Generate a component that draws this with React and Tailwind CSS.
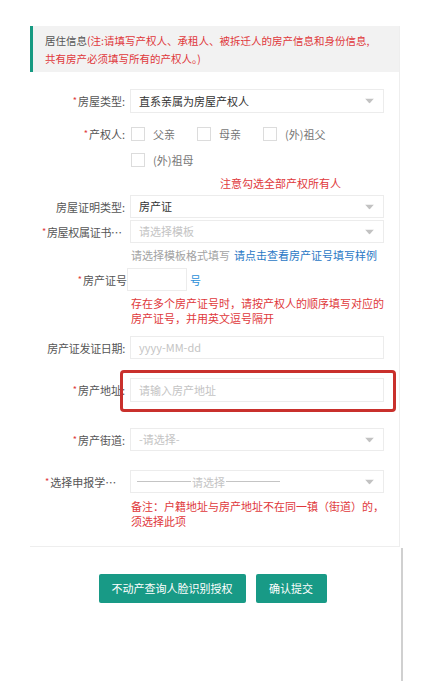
import React from 'react'

const font = { fontFamily: '"Noto Sans CJK SC", "Liberation Sans", sans-serif' }

const Arrow = () => (
  <svg width="9" height="5" viewBox="0 0 9 5" className="absolute right-[9px] top-1/2 -translate-y-1/2">
    <path d="M0 0 L9 0 L4.5 5 Z" fill="#c2c2c2" />
  </svg>
)

const Label = ({ children, required, className = '' }) => (
  <div className={`w-[100px] shrink-0 pr-[5px] text-right text-[#555] leading-[16px] truncate ${className}`}>
    {required && <span className="text-[#e0383b] text-[9px] align-top mr-[1px]">*</span>}
    {children}
  </div>
)

const Select = ({ value, placeholder, className = '' }) => (
  <div className={`relative w-[254px] h-[23px] border border-[#ececec] bg-white flex items-center pl-[8px] ${className}`}>
    {value ? (
      <span className="text-[#333]">{value}</span>
    ) : (
      <span className="text-[#c4c4c4]">{placeholder}</span>
    )}
    <Arrow />
  </div>
)

const Check = ({ label }) => (
  <div className="flex items-center w-[66px]">
    <span className="w-[14px] h-[14px] border border-[#dcdcdc] bg-white shrink-0" />
    <span className="ml-[8px] text-[#777] whitespace-nowrap leading-[16px]">{label}</span>
  </div>
)

const App = () => {
  return (
    <div className="w-[442px] min-h-[681px] bg-white text-[11px] leading-none" style={font}>
      <div className="pt-[26px] pl-[30px]">
        {/* card */}
        <div className="w-[370px] bg-white border-r border-b border-[#eeeeee] pb-[17px]">
          <div className="h-[46px] bg-[#f2f2f2] border-l-[3px] border-[#169a82] pl-[12px] pr-[4px] pt-[6px] leading-[18px] text-[10.5px] whitespace-nowrap">
            <span className="text-[#555]">居住信息</span>
            <span className="text-[#e0383b]">(注:请填写产权人、承租人、被拆迁人的房产信息和身份信息,</span>
            <br />
            <span className="text-[#e0383b]">共有房产必须填写所有的产权人。)</span>
          </div>

          <div className="flex items-center mt-[17px] h-[24px]">
            <Label required>房屋类型:</Label>
            <Select value="直系亲属为房屋产权人" className="h-[24px]" />
          </div>

          <div className="flex items-center mt-[11px] h-[20px]">
            <Label required>产权人:</Label>
            <div className="flex pl-[1px]">
              <Check label="父亲" />
              <Check label="母亲" />
              <Check label="(外)祖父" />
            </div>
          </div>
          <div className="flex items-center mt-[6px] h-[20px] pl-[101px]">
            <Check label="(外)祖母" />
          </div>

          <div className="mt-[5px] h-[16px] leading-[16px] pl-[190px] text-[#e0383b]">注意勾选全部产权所有人</div>

          <div className="flex items-center mt-[4px] h-[23px]">
            <Label>房屋证明类型:</Label>
            <Select value="房产证" />
          </div>

          <div className="flex items-center mt-[2px] h-[23px]">
            <Label required className="pl-[12px] pr-[3px] tracking-[-0.3px]">房屋权属证书类型:</Label>
            <Select placeholder="请选择模板" />
          </div>

          <div className="mt-[4px] h-[16px] leading-[16px] pl-[101px] whitespace-nowrap">
            <span className="text-[#a3a3a3]">请选择模板格式填写</span>
            <span className="ml-[4px] text-[#2b78c5]">请点击查看房产证号填写样例</span>
          </div>

          <div className="flex items-center mt-[5px] h-[23px]">
            <div className="w-[97px] shrink-0 text-right text-[#555] leading-[16px]">
              <span className="text-[#e0383b] text-[9px] align-top mr-[1px]">*</span>房产证号
            </div>
            <div className="w-[60px] h-[23px] border border-[#ececec] bg-white" />
            <span className="ml-[3px] text-[#2b8fd8] leading-[16px]">号</span>
          </div>

          <div className="mt-[5px] pl-[101px] pr-[12px] leading-[15px] text-[#e0383b]">
            存在多个房产证号时，请按产权人的顺序填写对应的房产证号，并用英文逗号隔开
          </div>

          <div className="flex items-center mt-[10px] h-[23px]">
            <Label className="pl-[14px] pr-[4px] tracking-[-0.3px]">房产证发证日期:</Label>
            <div className="w-[254px] h-[23px] border border-[#ececec] bg-white flex items-center pl-[8px] text-[#c4c4c4]">
              yyyy-MM-dd
            </div>
          </div>

          <div className="relative flex items-center mt-[19px] h-[24px]">
            <Label required>房产地址:</Label>
            <div className="w-[254px] h-[24px] border border-[#ececec] bg-white flex items-center pl-[8px] text-[#c4c4c4]">
              请输入房产地址
            </div>
            <div className="absolute left-[90px] top-[-8px] w-[276px] h-[42px] border-[3px] border-[#c9302c] rounded-[4px]" />
          </div>

          <div className="flex items-center mt-[26px] h-[23px]">
            <Label required>房产街道:</Label>
            <Select placeholder="-请选择-" />
          </div>

          <div className="flex items-center mt-[19px] h-[23px]">
            <Label required className="pl-[15px] pr-[13px]">选择申报学校:</Label>
            <div className="relative w-[254px] h-[23px] border border-[#ececec] bg-white flex items-center pl-[6px] text-[#c4c4c4]">
              <span className="w-[54px] h-px bg-[#c4c4c4]" />
              <span className="mx-[1px] leading-[16px]">请选择</span>
              <span className="w-[54px] h-px bg-[#c4c4c4]" />
              <Arrow />
            </div>
          </div>

          <div className="mt-[6px] pl-[101px] pr-[12px] leading-[15px] text-[#e0383b]">
            备注：户籍地址与房产地址不在同一镇（街道）的，须选择此项
          </div>
        </div>
      </div>

      {/* bottom area */}
      <div className="w-[403px] min-h-[133px] border-r-2 border-[#d0d0d0] mt-[1px] pt-[26px] flex justify-center gap-[10px] pl-[24px]">
        <button className="w-[147px] h-[29px] bg-[#189a86] rounded-[2px] text-white text-[11px]" style={font}>
          不动产查询人脸识别授权
        </button>
        <button className="w-[71px] h-[29px] bg-[#189a86] rounded-[2px] text-white text-[11px]" style={font}>
          确认提交
        </button>
      </div>
    </div>
  )
}

export default App
